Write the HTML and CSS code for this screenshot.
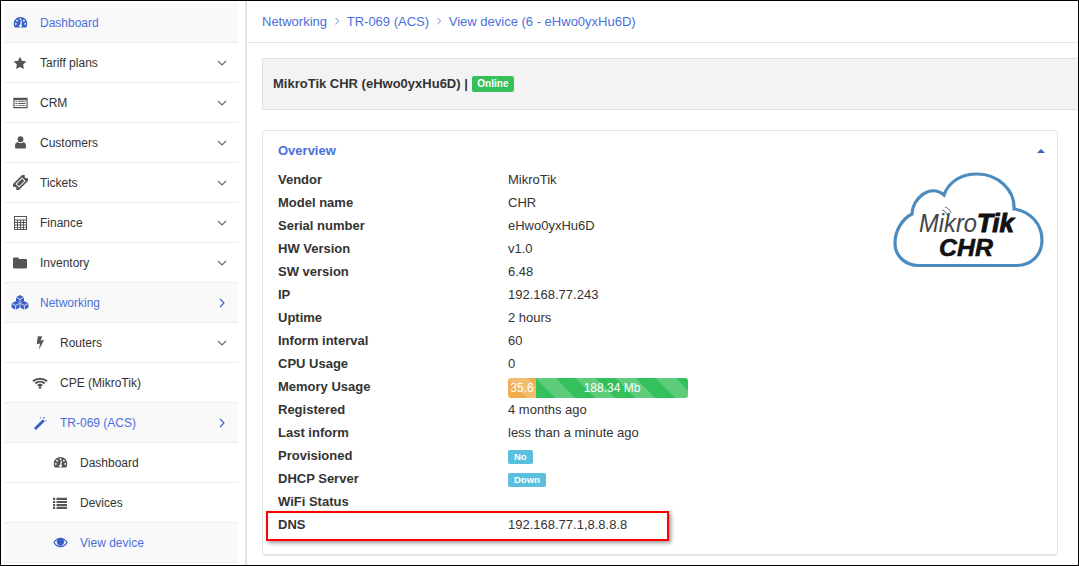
FILE: index.html
```html
<!DOCTYPE html>
<html lang="en">
<head>
<meta charset="utf-8">
<title>View device</title>
<link rel="stylesheet" href="styles.css">
</head>
<body>
<div class="frame">
  <aside class="sidebar">
    <nav class="menu">
      <a class="item first active"><span class="icon"><svg viewBox="0 0 16 16" width="15" height="15"><path class="fill" fill-rule="evenodd" d="M8 2.2C3.800 2.200.8 5.400.8 9.400c0 1.500.4 2.800 1 3.600.2.300.4.400.8.400h10.800c.4 0 .6-.1.8-.4.6-.8 1-2.100 1-3.600 0-4-3-7.200-7.200-7.200zM8 3.500a1 1 0 1 1 0 2 1 1 0 0 1 0-2zM4.400 5a1 1 0 1 1 0 2 1 1 0 0 1 0-2zm7.200 0a1 1 0 1 1 0 2 1 1 0 0 1 0-2zM3 8.500a1 1 0 1 1 0 2 1 1 0 0 1 0-2zm10 0a1 1 0 1 1 0 2 1 1 0 0 1 0-2zM9.700 6.300 8.900 10.200a1.500 1.500 0 1 1-1.300-.2l.9-3.900z"/></svg></span><span class="label">Dashboard</span></a>
      <a class="item"><span class="icon"><svg viewBox="0 0 16 16" width="14" height="14"><path class="fill" d="M8 .8l2.200 4.700 5.100.7-3.700 3.600.9 5.100L8 12.500l-4.500 2.400.9-5.100L.7 6.200l5.100-.7z"/></svg></span><span class="label">Tariff plans</span><span class="chev"><svg viewBox="0 0 10 10" width="10" height="10"><path d="M1 3l4 4 4-4"/></svg></span></a>
      <a class="item"><span class="icon"><svg viewBox="0 0 16 12" width="15" height="12"><path class="fill" fill-rule="evenodd" d="M.4.5h15.200v11H.4zM1.600 3v7.300h12.800V3zM2.600 4h2v1h-2zm3 0h7.800v1H5.600zM2.600 6h2v1h-2zm3 0h7.800v1H5.600zM2.600 8h2v1h-2zm3 0h7.800v1H5.600z"/></svg></span><span class="label">CRM</span><span class="chev"><svg viewBox="0 0 10 10" width="10" height="10"><path d="M1 3l4 4 4-4"/></svg></span></a>
      <a class="item"><span class="icon"><svg viewBox="0 0 12 14" width="11" height="13"><circle class="fill" cx="6" cy="3.500" r="3.200"/><path class="fill" d="M1 13.500c-.5 0-.9-.4-.9-1V10c0-2 1.400-3.200 3-3.200.8.600 1.800 1 2.900 1s2.100-.4 2.900-1c1.600 0 3 1.200 3 3.200v2.500c0 .6-.4 1-.9 1z"/></svg></span><span class="label">Customers</span><span class="chev"><svg viewBox="0 0 10 10" width="10" height="10"><path d="M1 3l4 4 4-4"/></svg></span></a>
      <a class="item"><span class="icon"><svg viewBox="0 0 16 16" width="15" height="15"><g transform="rotate(-45 8 8)"><path class="fill" fill-rule="evenodd" d="M-.5 3.500h17v3a1.500 1.500 0 0 0 0 3v3h-17v-3a1.500 1.500 0 0 0 0-3zM3 5.300v5.400h10V5.300z"/><path class="fill" d="M4 6.300h8v3.400H4z"/></g></svg></span><span class="label">Tickets</span><span class="chev"><svg viewBox="0 0 10 10" width="10" height="10"><path d="M1 3l4 4 4-4"/></svg></span></a>
      <a class="item"><span class="icon"><svg viewBox="0 0 13 14" width="13" height="14"><path class="fill" fill-rule="evenodd" d="M0 0h13v14H0zM1 1v2.500h11V1zM1 4.500V6h2V4.500zm3 0V6h2V4.500zm3 0V6h2V4.500zm3 0V6h2V4.500zM1 7v1.500h2V7zm3 0v1.500h2V7zm3 0v1.500h2V7zm3 0v1.500h2V7zM1 9.500V11h2V9.500zm3 0V11h2V9.500zm3 0V11h2V9.500zm3 0V11h2V9.500zM1 11.800V13h2v-1.200zm3 0V13h2v-1.200zm3 0V13h2v-1.200zm3 0V13h2v-1.200z"/></svg></span><span class="label">Finance</span><span class="chev"><svg viewBox="0 0 10 10" width="10" height="10"><path d="M1 3l4 4 4-4"/></svg></span></a>
      <a class="item"><span class="icon"><svg viewBox="0 0 14 12" width="14" height="12"><path class="fill" d="M1.200.5h3.600c.6 0 1 .4 1.100.9l.2.7h6.700c.6 0 1.200.5 1.200 1.200v6.800c0 .7-.6 1.300-1.200 1.300H1.200C.5 11.400 0 10.800 0 10.100V1.700C0 1 .5.500 1.200.5z"/></svg></span><span class="label">Inventory</span><span class="chev"><svg viewBox="0 0 10 10" width="10" height="10"><path d="M1 3l4 4 4-4"/></svg></span></a>
      <a class="item active"><span class="icon"><svg viewBox="0 0 18 15" width="18" height="15"><g class="cube" transform="translate(9 4.400)"><path class="fill" d="M0-4.300 4-2.200V2.200L0 4.300-4 2.200V-2.200z"/><path class="edge" d="M-4-2.200 0 0 4-2.200M0 0V4.300"/></g><g class="cube" transform="translate(4.600 10.500)"><path class="fill" d="M0-4.300 4-2.200V2.200L0 4.300-4 2.200V-2.200z"/><path class="edge" d="M-4-2.200 0 0 4-2.200M0 0V4.300"/></g><g class="cube" transform="translate(13.400 10.500)"><path class="fill" d="M0-4.300 4-2.200V2.200L0 4.300-4 2.200V-2.200z"/><path class="edge" d="M-4-2.200 0 0 4-2.200M0 0V4.300"/></g></svg></span><span class="label">Networking</span><span class="chev"><svg viewBox="0 0 10 10" width="10" height="10"><path d="M3 1l4 4-4 4"/></svg></span></a>
      <a class="item sub"><span class="icon"><svg viewBox="0 0 9 14" width="9" height="14"><path class="fill" d="M1.800.3h4.300L4.700 4.700l3.500-.9L3 13.700l1-6.200-3.300.8z"/></svg></span><span class="label">Routers</span><span class="chev"><svg viewBox="0 0 10 10" width="10" height="10"><path d="M1 3l4 4 4-4"/></svg></span></a>
      <a class="item sub"><span class="icon"><svg viewBox="0 0 16 12" width="16" height="12"><path class="line" d="M1 4.300C4.800 1 11.200 1 15 4.300M3.300 6.500c2.700-2.200 6.700-2.200 9.400 0M5.700 8.700c1.400-1 3.200-1 4.600 0"/><circle class="fill" cx="8" cy="10.500" r="1.300"/></svg></span><span class="label">CPE (MikroTik)</span></a>
      <a class="item sub active"><span class="icon"><svg viewBox="0 0 14 14" width="14" height="14"><path class="fill" d="M9.800 3.200l2 2L3 14 1 12z"/><path class="fill" d="M11 .5l.4 1 1 .3-1 .4-.4 1-.3-1-1-.4 1-.3zM13 4l.3.700.7.300-.7.300-.3.700-.3-.7-.7-.3.700-.3zM7.500.8l.3.700.7.300-.7.300-.3.700-.3-.7-.7-.3.700-.3z"/></svg></span><span class="label">TR-069 (ACS)</span><span class="chev"><svg viewBox="0 0 10 10" width="10" height="10"><path d="M3 1l4 4-4 4"/></svg></span></a>
      <a class="item subsub"><span class="icon"><svg viewBox="0 0 16 16" width="15" height="15"><path class="fill" fill-rule="evenodd" d="M8 2.200C3.800 2.200.8 5.400.8 9.400c0 1.500.4 2.800 1 3.600.2.300.4.400.8.400h10.800c.4 0 .6-.1.8-.4.6-.8 1-2.100 1-3.600 0-4-3-7.200-7.200-7.200zM8 3.500a1 1 0 1 1 0 2 1 1 0 0 1 0-2zM4.400 5a1 1 0 1 1 0 2 1 1 0 0 1 0-2zm7.200 0a1 1 0 1 1 0 2 1 1 0 0 1 0-2zM3 8.500a1 1 0 1 1 0 2 1 1 0 0 1 0-2zm10 0a1 1 0 1 1 0 2 1 1 0 0 1 0-2zM9.700 6.300 8.900 10.200a1.500 1.500 0 1 1-1.300-.2l.9-3.900z"/></svg></span><span class="label">Dashboard</span></a>
      <a class="item subsub"><span class="icon"><svg viewBox="0 0 14 12" width="14" height="12"><path class="fill" d="M0 .8h2.200V3H0zm3.500 0H14V3H3.500zM0 3.900h2.200v2.200H0zm3.500 0H14v2.200H3.500zM0 7h2.200v2.200H0zm3.500 0H14v2.200H3.500zM0 10h2.200v2H0zm3.500 0H14v2H3.500z"/></svg></span><span class="label">Devices</span></a>
      <a class="item subsub active"><span class="icon"><svg viewBox="0 0 16 11" width="15" height="11"><path class="fill" fill-rule="evenodd" d="M8 .5C4.800.5 2 2.300.3 5.500 2 8.700 4.800 10.500 8 10.500s6-1.800 7.700-5C14 2.300 11.200.5 8 .5zM1.800 5.500C3 3.700 4.300 2.600 5.400 2.100a3.800 3.800 0 1 0 5.200 0c1.100.5 2.400 1.600 3.600 3.400-1.500 2.300-3.700 3.800-6.200 3.800s-4.700-1.500-6.200-3.800z"/><circle class="fill" cx="8" cy="5" r="1.800"/></svg></span><span class="label">View device</span></a>
    </nav>
  </aside>
  <main class="content">
    <header class="crumbs">
      <a>Networking</a><svg class="sep" viewBox="0 0 10 10" width="8" height="8"><path d="M3 1l4 4-4 4"/></svg>
      <a>TR-069 (ACS)</a><svg class="sep" viewBox="0 0 10 10" width="8" height="8"><path d="M3 1l4 4-4 4"/></svg>
      <a>View device (6 - eHwo0yxHu6D)</a>
    </header>
    <section class="title-bar">
      <h1>MikroTik CHR (eHwo0yxHu6D) |</h1><span class="badge online">Online</span>
    </section>
    <section class="panel">
      <div class="panel-head"><h2>Overview</h2><span class="caret"></span></div>
      <div class="panel-body">
        <dl class="facts">
          <div class="row"><dt>Vendor</dt><dd>MikroTik</dd></div>
          <div class="row"><dt>Model name</dt><dd>CHR</dd></div>
          <div class="row"><dt>Serial number</dt><dd>eHwo0yxHu6D</dd></div>
          <div class="row"><dt>HW Version</dt><dd>v1.0</dd></div>
          <div class="row"><dt>SW version</dt><dd>6.48</dd></div>
          <div class="row"><dt>IP</dt><dd>192.168.77.243</dd></div>
          <div class="row"><dt>Uptime</dt><dd>2 hours</dd></div>
          <div class="row"><dt>Inform interval</dt><dd>60</dd></div>
          <div class="row"><dt>CPU Usage</dt><dd>0</dd></div>
          <div class="row"><dt>Memory Usage</dt><dd><div class="progress"><span class="seg warn">35.6</span><span class="seg ok">188.34 Mb</span></div></dd></div>
          <div class="row"><dt>Registered</dt><dd>4 months ago</dd></div>
          <div class="row"><dt>Last inform</dt><dd>less than a minute ago</dd></div>
          <div class="row"><dt>Provisioned</dt><dd><span class="badge info">No</span></dd></div>
          <div class="row"><dt>DHCP Server</dt><dd><span class="badge info">Down</span></dd></div>
          <div class="row"><dt>WiFi Status</dt><dd></dd></div>
          <div class="row"><dt>DNS</dt><dd>192.168.77.1,8.8.8.8</dd></div>
        </dl>
        <div class="logo">
          <svg viewBox="0 0 152 97" width="152" height="97">
            <path class="cloud" d="M27 93.500C12 93.500 3 83 3 71 3 59 10 47 20 42 20 27 38 11 52 23 57 9 70 2 85 2 106 2 123 18 122 37 138 39 150 52 150 68 150 83 139 93.500 125 93.500z"/>
            <text class="mk" x="27" y="60" textLength="58" lengthAdjust="spacingAndGlyphs">Mikro</text>
            <text class="tik" x="85" y="60" textLength="37" lengthAdjust="spacingAndGlyphs">Tik</text>
            <text class="chr" x="47" y="84" textLength="54" lengthAdjust="spacingAndGlyphs">CHR</text>
            <path class="arc" d="M53 35c3 1 5 3 6 6M50 38c3 1 5 3 6 6"/>
          </svg>
        </div>
      </div>
      <div class="highlight"></div>
    </section>
  </main>
</div>
</body>
</html>
```
FILE: styles.css
```css
* { box-sizing: border-box; }
html, body { margin: 0; height: 100%; }
body {
  font-family: "Liberation Sans", Arial, sans-serif;
  font-size: 13px;
  color: #333;
  background: #fff;
  overflow: hidden;
}
.frame {
  width: 1079px;
  height: 566px;
  border: 1px solid #000;
  display: flex;
  overflow: hidden;
}
.sidebar {
  width: 246px;
  flex: none;
  border-right: 2px solid #e4e4e4;
  padding: 2px 7px 0 3px;
  overflow: hidden;
}
.menu { display: flex; flex-direction: column; }
.item {
  height: 40px;
  flex: none;
  display: flex;
  align-items: center;
  border-bottom: 1px solid #ececec;
  font-size: 12px;
  color: #333;
  padding-left: 7px;
  padding-right: 11px;
}
.item.active { background: #f9f9f9; color: #4a6fdc; }
.icon { width: 18px; display: flex; justify-content: center; align-items: center; margin-right: 11px; flex: none; }
.fill { fill: #555; }
.line { fill: none; stroke: #555; stroke-width: 2; }
.active .fill { fill: #3a5fc8; }
.edge { fill: none; stroke: #f9f9f9; stroke-width: .8; }
.label { flex: 1; }
.chev { display: flex; }
.chev svg path, .sep path { fill: none; stroke: #666; stroke-width: 1.100; }
.active .chev svg path { stroke: #3a5fc8; }
.sub { padding-left: 27px; }
.subsub { padding-left: 47px; }
.content { flex: 1; min-width: 0; display: flex; flex-direction: column; }
.crumbs {
  height: 42px;
  flex: none;
  border-bottom: 1px solid #e4e4e4;
  display: flex;
  align-items: center;
  padding-left: 15px;
  padding-bottom: 1px;
  font-size: 13px;
  color: #4a6fdc;
}
.crumbs .sep { margin: 0 6px 0 5.700px; }
.sep path { stroke: #4a6fdc; }
.title-bar {
  margin: 15px 0 0 15px;
  height: 52px;
  background: #f3f3f3;
  border: 1px solid #e1e1e1;
  border-right: 0;
  display: flex;
  align-items: center;
  padding-left: 10px;
  gap: 4px;
}
h1 { margin: 0 0 1px; font-size: 13px; font-weight: 700; color: #333; }
.badge {
  display: inline-block;
  font-size: 10px;
  font-weight: 700;
  color: #fff;
  border-radius: 2px;
  line-height: 14px;
  padding: 0 6px;
}
.online { background: #34c15b; line-height: 16px; padding: 0 5.500px; }
.info { background: #5bc0de; font-size: 9.500px; margin-top: 2px; vertical-align: top; }
.panel {
  margin: 20px 20px 0 15px;
  height: 426px;
  flex: none;
  border: 1px solid #e4e4e4;
  border-bottom-width: 2px;
  border-radius: 4px;
  position: relative;
}
.panel-head {
  display: flex;
  justify-content: space-between;
  align-items: center;
  height: 38px;
  padding: 0 12px 0 15px;
}
h2 { margin: 0; font-size: 13px; font-weight: 700; color: #4a6fdc; }
.caret {
  width: 0; height: 0;
  margin-top: 2px;
  border-left: 4px solid transparent;
  border-right: 4px solid transparent;
  border-bottom: 4px solid #3a5fc8;
}
.panel-body { display: flex; justify-content: space-between; padding: 0 13px 0 15px; }
.facts { margin: -1px 0 0; width: 500px; }
.row { display: flex; height: 23px; align-items: center; }
dt { width: 230px; font-weight: 700; color: #333; flex: none; }
dd { margin: 0; color: #333; flex: 1; }
.progress {
  width: 180px;
  height: 20px;
  margin-top: 2px;
  display: flex;
  border-radius: 3px;
  overflow: hidden;
  font-size: 12px;
  line-height: 20px;
  color: #fff;
  text-align: center;
}
.seg {
  display: block;
  background-image: linear-gradient(45deg, rgba(255,255,255,.2) 25%, transparent 25%, transparent 50%, rgba(255,255,255,.2) 50%, rgba(255,255,255,.2) 75%, transparent 75%, transparent);
  background-size: 40px 40px;
}
.warn { width: 28px; background-color: #f0ad4e; }
.ok { flex: 1; background-color: #34c15b; }
.logo { margin-top: 3px; }
.cloud { fill: #fff; stroke: #4b8bbe; stroke-width: 3.200; }
.mk { font: italic 400 25px "Liberation Sans", Arial, sans-serif; fill: #444; }
.tik { font: italic 700 25px "Liberation Sans", Arial, sans-serif; fill: #111; stroke: #111; stroke-width: 1; }
.chr { font: italic 700 24px "Liberation Sans", Arial, sans-serif; fill: #111; stroke: #111; stroke-width: .6; }
.arc { fill: none; stroke: #444; stroke-width: .8; }
.highlight {
  position: absolute;
  left: 3px;
  top: 380px;
  width: 403px;
  height: 30px;
  border: 2px solid #f00;
  box-shadow: 2px 2px 4px rgba(0,0,0,.4);
  pointer-events: none;
}
```
